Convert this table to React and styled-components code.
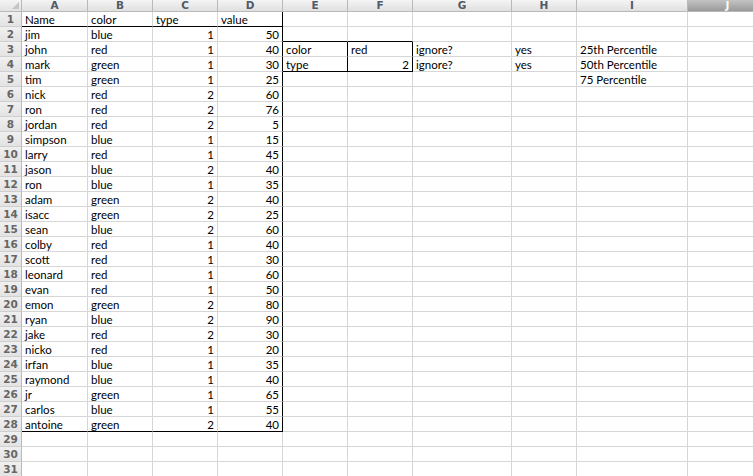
import React from "react";
import styled, { createGlobalStyle } from "styled-components";

const GlobalStyle = createGlobalStyle`
  html, body {
    margin: 0;
    padding: 0;
    background: #ffffff;
    overflow: hidden;
  }
`;

const COLS = [
  { key: "A", w: 66 },
  { key: "B", w: 65 },
  { key: "C", w: 65 },
  { key: "D", w: 65 },
  { key: "E", w: 65 },
  { key: "F", w: 65 },
  { key: "G", w: 99 },
  { key: "H", w: 65 },
  { key: "I", w: 111 },
  { key: "J", w: 80 },
];

const Sheet = styled.div`
  display: grid;
  grid-template-columns: 22px ${COLS.map((c) => c.w + "px").join(" ")};
  grid-auto-rows: 15px;
  grid-template-rows: 12px;
  width: 753px;
  height: 476px;
  overflow: hidden;
  font-family: Lato, "Liberation Sans", sans-serif;
  font-size: 11.5px;
  color: #000;
`;

const Corner = styled.div`
  position: relative;
  box-sizing: border-box;
  background: linear-gradient(#f4f4f4, #e2e2e2);
  border-right: 1px solid #b9b9b9;
  border-bottom: 1px solid #b9b9b9;
  &::after {
    content: "";
    position: absolute;
    right: 2px;
    bottom: 2px;
    width: 0;
    height: 0;
    border-left: 7px solid transparent;
    border-bottom: 7px solid #c4c4c4;
  }
`;

const ColHead = styled.div`
  box-sizing: border-box;
  display: flex;
  align-items: center;
  justify-content: center;
  background: ${(p) =>
    p.$active
      ? "linear-gradient(#c3c3c3, #9a9a9a)"
      : "linear-gradient(#f4f4f4, #e0e0e0)"};
  border-right: 1px solid #b9b9b9;
  border-bottom: 1px solid #b9b9b9;
  color: ${(p) => (p.$active ? "#fbfbf2" : "#505a68")};
  font-family: "DejaVu Sans", sans-serif;
  font-weight: bold;
  font-size: 10.5px;
  line-height: 1;
`;

const RowHead = styled.div`
  box-sizing: border-box;
  display: flex;
  align-items: center;
  justify-content: center;
  background: linear-gradient(#f0f0f0, #e3e3e3);
  border-right: 1px solid #b9b9b9;
  border-bottom: 1px solid #cfcfcf;
  color: #666;
  font-family: "DejaVu Sans", sans-serif;
  font-weight: bold;
  font-size: 10.5px;
  line-height: 1;
`;

const Cell = styled.div`
  box-sizing: border-box;
  display: flex;
  align-items: center;
  justify-content: ${(p) => (p.$num ? "flex-end" : "flex-start")};
  padding: 1px 3px 0;
  white-space: nowrap;
  border-right: 1px solid ${(p) => (p.$br ? "#000" : "#d6d6d6")};
  border-bottom: 1px solid ${(p) => (p.$bb ? "#000" : "#d6d6d6")};
  line-height: 1;
`;

const people = [
  ["Name", "color", "type", "value"],
  ["jim", "blue", 1, 50],
  ["john", "red", 1, 40],
  ["mark", "green", 1, 30],
  ["tim", "green", 1, 25],
  ["nick", "red", 2, 60],
  ["ron", "red", 2, 76],
  ["jordan", "red", 2, 5],
  ["simpson", "blue", 1, 15],
  ["larry", "red", 1, 45],
  ["jason", "blue", 2, 40],
  ["ron", "blue", 1, 35],
  ["adam", "green", 2, 40],
  ["isacc", "green", 2, 25],
  ["sean", "blue", 2, 60],
  ["colby", "red", 1, 40],
  ["scott", "red", 1, 30],
  ["leonard", "red", 1, 60],
  ["evan", "red", 1, 50],
  ["emon", "green", 2, 80],
  ["ryan", "blue", 2, 90],
  ["jake", "red", 2, 30],
  ["nicko", "red", 1, 20],
  ["irfan", "blue", 1, 35],
  ["raymond", "blue", 1, 40],
  ["jr", "green", 1, 65],
  ["carlos", "blue", 1, 55],
  ["antoine", "green", 2, 40],
];

const extra = {
  3: ["color", "red", "ignore?", "yes", "25th Percentile"],
  4: ["type", 2, "ignore?", "yes", "50th Percentile"],
  5: ["", "", "", "", "75 Percentile"],
};

const TOTAL_ROWS = 31;

function cellValue(row, colIdx) {
  if (colIdx < 4) {
    const r = people[row - 1];
    return r ? r[colIdx] : "";
  }
  const e = extra[row];
  if (e && colIdx - 4 < e.length) return e[colIdx - 4];
  return "";
}

// black borders: the A1:D28 table and the E3:F4 lookup box
function borders(row, col) {
  let br = false;
  let bb = false;
  if (col === "D" && row >= 1 && row <= 28) br = true;
  if ("ABCD".includes(col) && (row === 1 || row === 28)) bb = true;
  if ((col === "E" || col === "F") && (row === 3 || row === 4)) br = true;
  if ((col === "E" || col === "F") && (row === 2 || row === 4)) bb = true;
  return { br, bb };
}

export default function App() {
  const rows = [];
  for (let r = 1; r <= TOTAL_ROWS; r++) rows.push(r);

  return (
    <>
      <GlobalStyle />
      <Sheet>
        <Corner />
        {COLS.map((c) => (
          <ColHead key={c.key} $active={c.key === "J"}>
            {c.key}
          </ColHead>
        ))}
        {rows.map((r) => (
          <React.Fragment key={r}>
            <RowHead>{r}</RowHead>
            {COLS.map((c, i) => {
              const v = cellValue(r, i);
              const { br, bb } = borders(r, c.key);
              return (
                <Cell key={c.key} $num={typeof v === "number"} $br={br} $bb={bb}>
                  {v}
                </Cell>
              );
            })}
          </React.Fragment>
        ))}
      </Sheet>
    </>
  );
}
